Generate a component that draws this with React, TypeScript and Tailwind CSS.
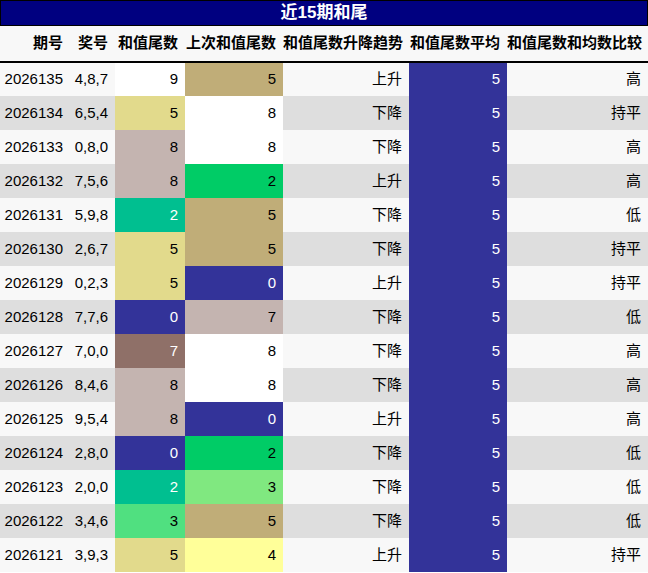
const rows: [string, string, number, number, string, string][] = [
  ["2026135", "4,8,7", 9, 5, "上升", "高"],
  ["2026134", "6,5,4", 5, 8, "下降", "持平"],
  ["2026133", "0,8,0", 8, 8, "下降", "高"],
  ["2026132", "7,5,6", 8, 2, "上升", "高"],
  ["2026131", "5,9,8", 2, 5, "下降", "低"],
  ["2026130", "2,6,7", 5, 5, "下降", "持平"],
  ["2026129", "0,2,3", 5, 0, "上升", "持平"],
  ["2026128", "7,7,6", 0, 7, "下降", "低"],
  ["2026127", "7,0,0", 7, 8, "下降", "高"],
  ["2026126", "8,4,6", 8, 8, "下降", "高"],
  ["2026125", "9,5,4", 8, 0, "上升", "高"],
  ["2026124", "2,8,0", 0, 2, "下降", "低"],
  ["2026123", "2,0,0", 2, 3, "下降", "低"],
  ["2026122", "3,4,6", 3, 5, "下降", "低"],
  ["2026121", "3,9,3", 5, 4, "上升", "持平"],
];

const sumColor: Record<number, string> = {
  9: "bg-white text-black",
  8: "bg-[#c4b4b0] text-black",
  7: "bg-[#8f7068] text-white",
  5: "bg-[#e2da8c] text-black",
  3: "bg-[#50e080] text-black",
  2: "bg-[#00bf90] text-white",
  0: "bg-[#333399] text-white",
};

const prevColor: Record<number, string> = {
  8: "bg-white text-black",
  7: "bg-[#c4b4b0] text-black",
  5: "bg-[#c0ad78] text-black",
  4: "bg-[#ffff99] text-black",
  3: "bg-[#80e880] text-black",
  2: "bg-[#00cc66] text-black",
  0: "bg-[#333399] text-white",
};

export default function App() {
  return (
    <div className="w-[648px] h-[573px] bg-white text-[15px] text-black" style={{ fontFamily: '"Liberation Sans", "Noto Sans CJK SC", sans-serif' }}>
      <div className="h-[26px] bg-[#000080] border border-black text-white font-bold text-[17px] flex items-center justify-center">
        近15期和尾
      </div>
      <table className="w-full border-collapse table-fixed">
        <colgroup>
          <col className="w-[70px]" />
          <col className="w-[45px]" />
          <col className="w-[70px]" />
          <col className="w-[98px]" />
          <col className="w-[126px]" />
          <col className="w-[98px]" />
          <col className="w-[141px]" />
        </colgroup>
        <thead>
          <tr className="h-[36px] bg-[#f8f8f8] border-b-2 border-black font-bold">
            {["期号", "奖号", "和值尾数", "上次和值尾数", "和值尾数升降趋势", "和值尾数平均", "和值尾数和均数比较"].map((h) => (
              <th key={h} className="text-right pr-[7px] whitespace-nowrap">{h}</th>
            ))}
          </tr>
        </thead>
        <tbody>
          {rows.map((r, i) => {
            const bg = i % 2 === 0 ? "bg-[#f8f8f8]" : "bg-[#dedede]";
            return (
              <tr key={r[0]} className={`h-[34px] ${bg}`}>
                <td className="text-right pr-[7px]">{r[0]}</td>
                <td className="text-right pr-[7px]">{r[1]}</td>
                <td className={`text-right pr-[7px] ${sumColor[r[2]]}`}>{r[2]}</td>
                <td className={`text-right pr-[7px] ${prevColor[r[3]]}`}>{r[3]}</td>
                <td className="text-right pr-[7px]">{r[4]}</td>
                <td className="text-right pr-[7px] bg-[#333399] text-white">5</td>
                <td className="text-right pr-[7px]">{r[5]}</td>
              </tr>
            );
          })}
        </tbody>
      </table>
    </div>
  );
}
